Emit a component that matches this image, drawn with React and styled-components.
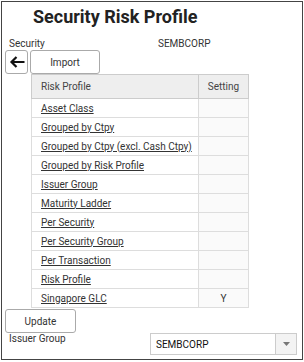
import styled, { createGlobalStyle } from "styled-components";

const GlobalStyle = createGlobalStyle`
body {
    margin: 0;
    background: #ffffff;
    font-family: Roboto, "Liberation Sans", sans-serif;
    color: #333333;
}
`

const rows = [
    { name: "Asset Class", setting: "" },
    { name: "Grouped by Ctpy", setting: "" },
    { name: "Grouped by Ctpy (excl. Cash Ctpy)", setting: "" },
    { name: "Grouped by Risk Profile", setting: "" },
    { name: "Issuer Group", setting: "" },
    { name: "Maturity Ladder", setting: "" },
    { name: "Per Security", setting: "" },
    { name: "Per Security Group", setting: "" },
    { name: "Per Transaction", setting: "" },
    { name: "Risk Profile", setting: "" },
    { name: "Singapore GLC", setting: "Y" },
];

const App = () => {
    return (
        <>
        <GlobalStyle />
        <Frame>
            <Title>Security Risk Profile</Title>

            <InfoRow>
                <Label>Security</Label>
                <Value>SEMBCORP</Value>
            </InfoRow>

            <Toolbar>
                <BackButton aria-label="Back">
                    <svg width="16" height="12" viewBox="0 0 16 12">
                        <path d="M15.5 6H2.5M7.5 1L2.5 6l5 5" fill="none" stroke="#111" strokeWidth="2.2" />
                    </svg>
                </BackButton>
                <Button $width={70}>Import</Button>
            </Toolbar>

            <Table>
                <thead>
                    <tr>
                        <HeadCell>Risk Profile</HeadCell>
                        <HeadCell $center>Setting</HeadCell>
                    </tr>
                </thead>
                <tbody>
                    {rows.map(row => (
                        <tr key={row.name}>
                            <Cell><Link href="#">{row.name}</Link></Cell>
                            <Cell $center>{row.setting}</Cell>
                        </tr>
                    ))}
                </tbody>
            </Table>

            <Button $width={71} $gap={1}>Update</Button>

            <BottomRow>
                <Label>Issuer Group</Label>
                <Select>
                    <SelectText>SEMBCORP</SelectText>
                    <SelectArrow>
                        <svg width="7" height="4" viewBox="0 0 7 4">
                            <path d="M0 0h7L3.5 4z" fill="#777" />
                        </svg>
                    </SelectArrow>
                </Select>
            </BottomRow>
        </Frame>
        </>
    )
}

export default App

const Frame = styled.div`
box-sizing: border-box;
margin: 1px;
width: 302px;
height: 359px;
border: 1px solid #444444;
padding: 0 5px 0 3px;
display: flex;
flex-direction: column;
`

const Title = styled.h1`
margin: 5px 0 0 28px;
font-size: 18px;
font-weight: 700;
color: #222222;
line-height: 20px;
`

const InfoRow = styled.div`
display: grid;
grid-template-columns: 153px auto;
margin-top: 11px;
font-size: 10px;
line-height: 12px;
`

const Label = styled.span`
font-size: 10px;
line-height: 12px;
color: #333333;
padding-left: 4px;
`

const Value = styled.span`
color: #333333;
`

const Toolbar = styled.div`
display: flex;
gap: 2px;
`

const BackButton = styled.button`
box-sizing: border-box;
width: 23px;
height: 24px;
padding: 0;
border: 1px solid #aaaaaa;
border-radius: 3px;
background: #ffffff;
display: flex;
align-items: center;
justify-content: center;
`

const Button = styled.button`
box-sizing: border-box;
width: ${p => p.$width}px;
height: 24px;
margin-top: ${p => p.$gap || 0}px;
padding: 0;
border: 1px solid #aaaaaa;
border-radius: 3px;
background: #ffffff;
font-family: Roboto, "Liberation Sans", sans-serif;
font-size: 10px;
color: #333333;
`

const Table = styled.table`
margin-left: 26px;
width: 218px;
border-collapse: collapse;
font-size: 10px;
`

const HeadCell = styled.th`
height: 23px;
padding: 0 0 0 9px;
background: #eeeeee;
border: 1px solid #cccccc;
font-weight: 400;
text-align: ${p => (p.$center ? "center" : "left")};
color: #444444;
${p => p.$center && "width: 49px; padding: 0;"}
`

const Cell = styled.td`
height: 18px;
padding: 0 0 0 9px;
border: 1px solid #dddddd;
text-align: ${p => (p.$center ? "center" : "left")};
background: ${p => (p.$center ? "#fafafa" : "#ffffff")};
${p => p.$center && "padding: 0;"}
`

const Link = styled.a`
color: #333333;
text-decoration: underline;
`

const BottomRow = styled.div`
display: flex;
align-items: flex-start;
`

const Select = styled.div`
box-sizing: border-box;
width: 147px;
height: 22px;
margin-left: auto;
border: 1px solid #cccccc;
display: flex;
align-items: stretch;
background: #ffffff;
`

const SelectText = styled.span`
flex: 1;
display: flex;
align-items: center;
padding-left: 5px;
font-size: 10px;
color: #111111;
`

const SelectArrow = styled.span`
width: 20px;
border-left: 1px solid #cccccc;
background: #f3f3f3;
display: flex;
align-items: center;
justify-content: center;
`
